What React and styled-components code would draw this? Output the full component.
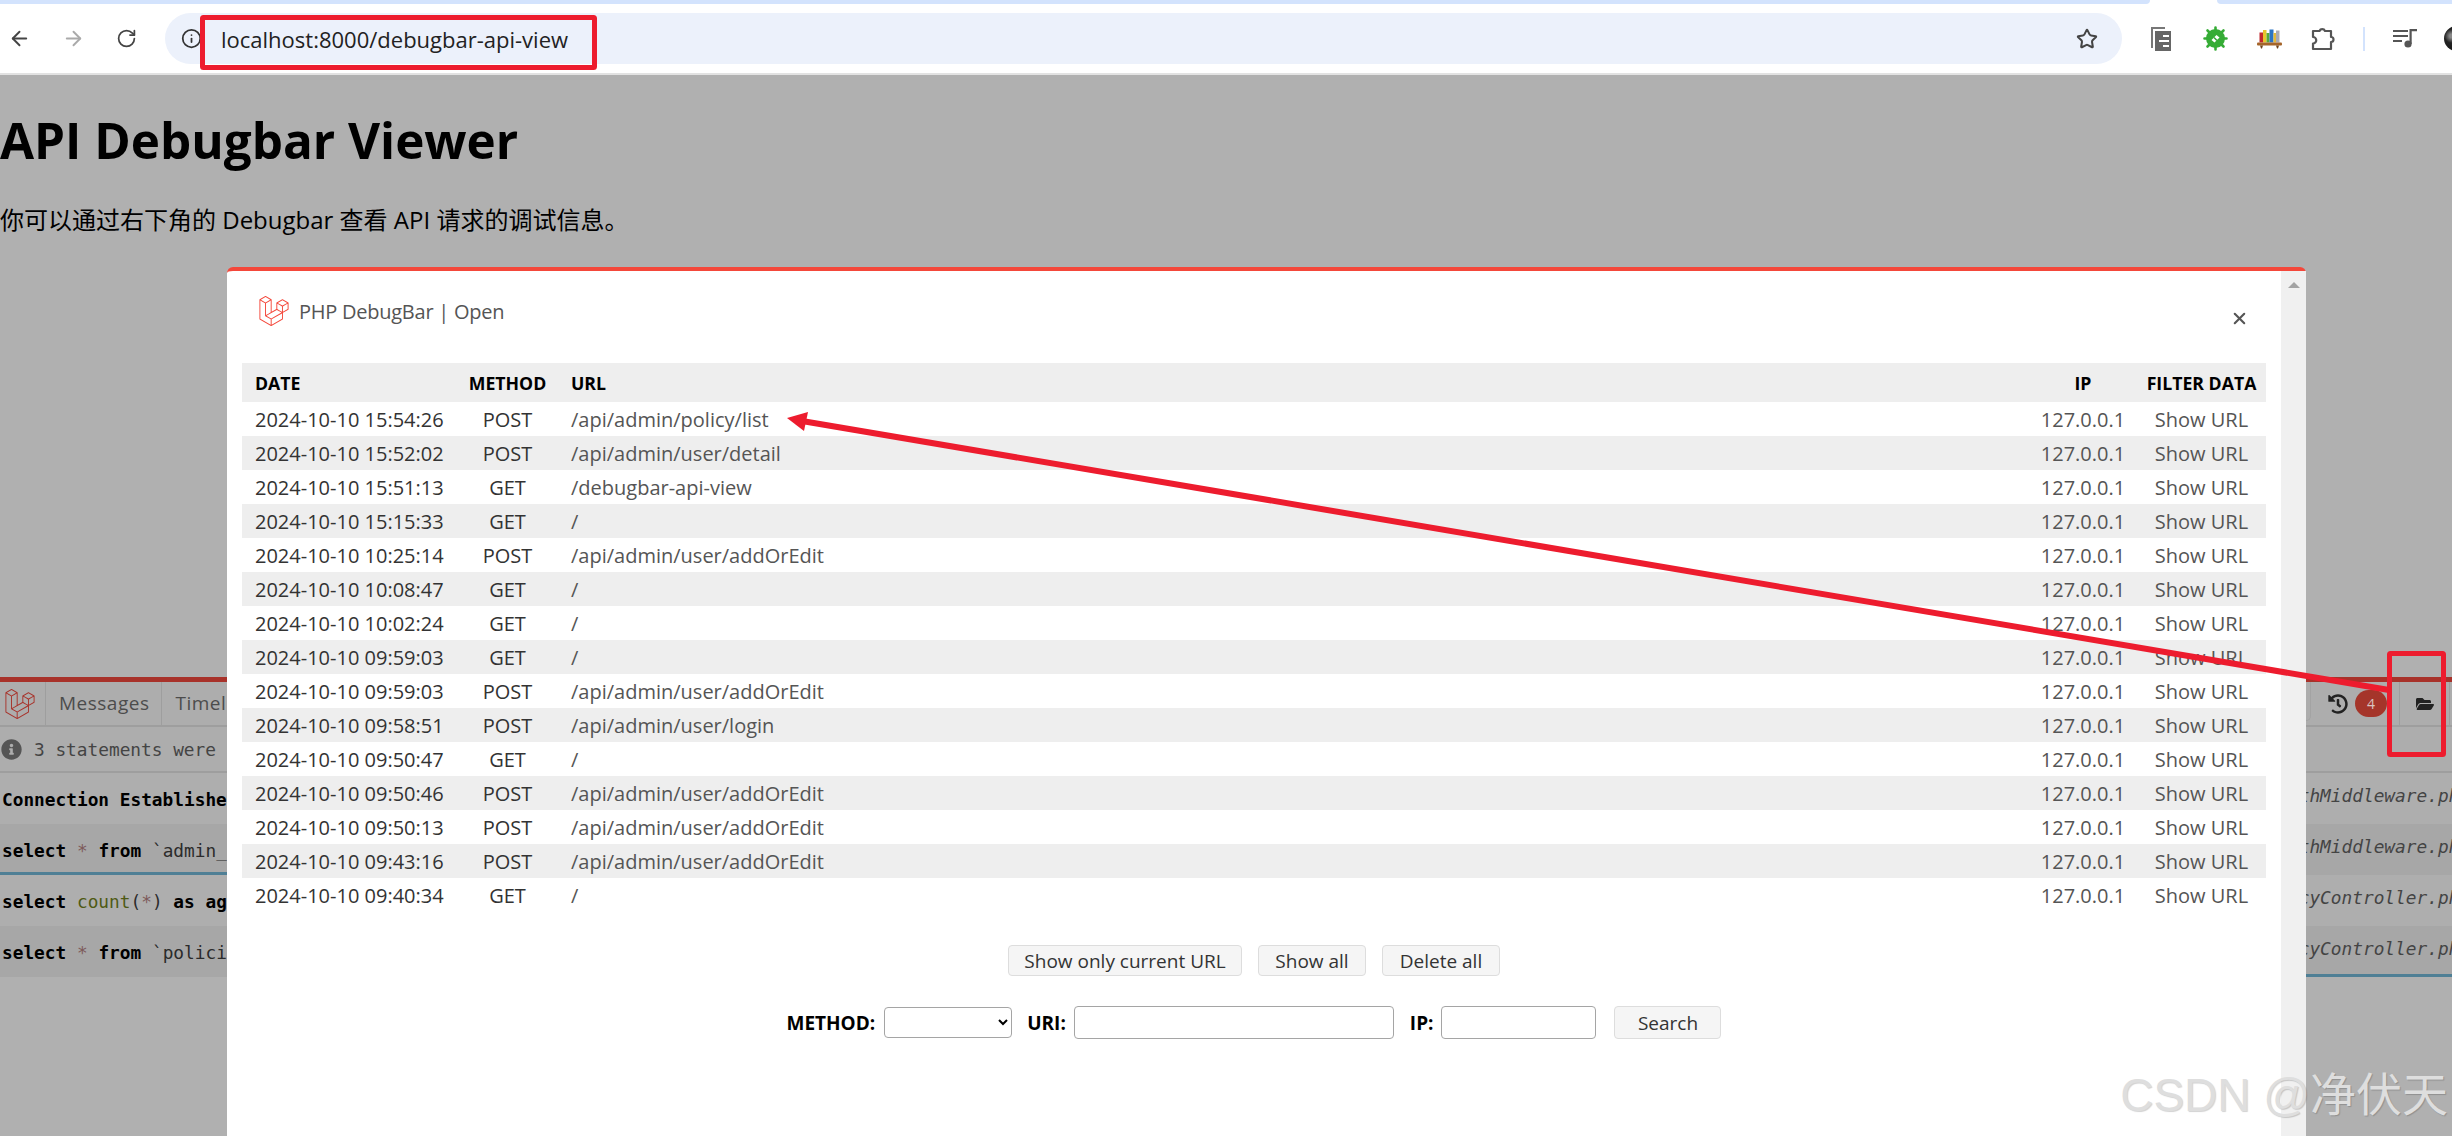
import React from 'react';
import styled, { createGlobalStyle } from 'styled-components';
import { ArrowLeft, ArrowRight, RotateCw, Info, Star, X } from 'lucide-react';
import { FaHistory, FaFolderOpen, FaInfoCircle } from 'react-icons/fa';
import { SiLaravel } from 'react-icons/si';

const UI_FONT = `"Open Sans", "Noto Sans CJK SC", sans-serif`;
const MONO_FONT = `"DejaVu Sans Mono", monospace`;

const requests = [
  ['2024-10-10 15:54:26', 'POST', '/api/admin/policy/list'],
  ['2024-10-10 15:52:02', 'POST', '/api/admin/user/detail'],
  ['2024-10-10 15:51:13', 'GET', '/debugbar-api-view'],
  ['2024-10-10 15:15:33', 'GET', '/'],
  ['2024-10-10 10:25:14', 'POST', '/api/admin/user/addOrEdit'],
  ['2024-10-10 10:08:47', 'GET', '/'],
  ['2024-10-10 10:02:24', 'GET', '/'],
  ['2024-10-10 09:59:03', 'GET', '/'],
  ['2024-10-10 09:59:03', 'POST', '/api/admin/user/addOrEdit'],
  ['2024-10-10 09:58:51', 'POST', '/api/admin/user/login'],
  ['2024-10-10 09:50:47', 'GET', '/'],
  ['2024-10-10 09:50:46', 'POST', '/api/admin/user/addOrEdit'],
  ['2024-10-10 09:50:13', 'POST', '/api/admin/user/addOrEdit'],
  ['2024-10-10 09:43:16', 'POST', '/api/admin/user/addOrEdit'],
  ['2024-10-10 09:40:34', 'GET', '/'],
];

const CopyIcon = () => (
  <svg width="22" height="26" viewBox="0 0 22 26">
    <path d="M2 22V2h13" fill="none" stroke="#777" strokeWidth="2" />
    <path d="M5 5h16v20H5z" fill="#666" />
    <path d="M13 10h6M9 15h10M13 20h6" stroke="#fff" strokeWidth="2" />
  </svg>
);

const BugIcon = () => (
  <svg width="25" height="25" viewBox="0 0 25 25">
    <g stroke="#35ac35" strokeWidth="2.6" strokeLinecap="round">
      <path d="M12.5 1.5v22M1.5 12.5h22M4.5 4.5l16 16M20.5 4.5l-16 16" />
    </g>
    <circle cx="12.5" cy="12.5" r="9.5" fill="#35ac35" />
    <path d="M8.5 14l5-5 3 2.5-5 5z" fill="#fff" />
    <path d="M11 11.5l3 3" stroke="#35ac35" strokeWidth="1.6" />
  </svg>
);

const ShelfIcon = () => (
  <svg width="25" height="20" viewBox="0 0 25 20">
    <rect x="2.5" y="3.5" width="3.5" height="10" fill="#c0272d" />
    <rect x="6" y="1" width="3.5" height="12.5" fill="#e8c52c" />
    <rect x="9.5" y="4" width="3" height="9.5" fill="#59a83a" />
    <rect x="12.5" y="0.5" width="4" height="13" fill="#2c74c4" />
    <rect x="16.5" y="4" width="2.5" height="9.5" fill="#e2b93a" />
    <rect x="19" y="1.5" width="3.5" height="12" fill="#a9a9b4" />
    <rect x="0" y="13.5" width="25" height="3" rx="1" fill="#a5652a" />
    <path d="M3 16.5h3l-1 3H4zM19 16.5h3l-1 3h-1z" fill="#6e421c" />
  </svg>
);

const PuzzleIcon = () => (
  <svg width="25" height="25" viewBox="0 0 25 25">
    <path
      d="M2 5h6.5a3 3 0 0 1 5.5 0H20v6a2.4 2.4 0 0 1 0 5v7H2v-5.5a3 3 0 0 0 0-6.5z"
      fill="none"
      stroke="#555"
      strokeWidth="2.2"
      strokeLinejoin="round"
    />
  </svg>
);

const MusicListIcon = () => (
  <svg width="24" height="19" viewBox="0 0 24 19">
    <path d="M0 2h15M0 7h15M0 12h9" stroke="#555" strokeWidth="2" />
    <circle cx="15" cy="15" r="3.6" fill="#555" />
    <path d="M17.6 15V1.2H24" fill="none" stroke="#555" strokeWidth="2.2" />
  </svg>
);

const Annotations = () => (
  <AnnotationLayer viewBox="0 0 2452 1136">
    <rect x="202.5" y="17.5" width="392" height="50" fill="none" stroke="#ed1c2e" strokeWidth="5" rx="1" />
    <rect x="2389.5" y="653.5" width="54" height="101" fill="none" stroke="#ed1c2e" strokeWidth="5" rx="1" />
    <line x1="2389" y1="690" x2="802" y2="421" stroke="#ed1c2e" strokeWidth="6" />
    <polygon points="787,418 808,412 804,431" fill="#ed1c2e" />
  </AnnotationLayer>
);

const App = () => (
  <Page>
    <GlobalStyle />
    <TabStrip>
      <TabRun />
      <TabGap />
      <TabRun />
    </TabStrip>
    <Toolbar>
      <NavButtons>
        <ArrowLeft size={23} color="#444" />
        <ArrowRight size={23} color="#aaa" />
        <RotateCw size={21} color="#444" />
      </NavButtons>
      <Omnibox>
        <Info size={21} color="#333" />
        <UrlText>localhost:8000/debugbar-api-view</UrlText>
        <Star size={22} color="#444" strokeWidth={2.2} />
      </Omnibox>
      <ExtSlot><CopyIcon /></ExtSlot>
      <ExtSlot><BugIcon /></ExtSlot>
      <ExtSlot><ShelfIcon /></ExtSlot>
      <ExtSlot><PuzzleIcon /></ExtSlot>
      <ToolbarDivider />
      <ExtSlot><MusicListIcon /></ExtSlot>
      <Avatar />
    </Toolbar>

    <Heading>API Debugbar Viewer</Heading>
    <Intro>你可以通过右下角的 Debugbar 查看 API 请求的调试信息。</Intro>

    <DebugBar>
      <BarHeader>
        <BarLogo><SiLaravel size={30} /></BarLogo>
        <BarTab>Messages</BarTab>
        <BarTab>Timeline</BarTab>
        <BarControls>
          <HistoryCell>
            <FaHistory size={20} />
            <Badge>4</Badge>
          </HistoryCell>
          <FolderCell><FaFolderOpen size={18} /></FolderCell>
        </BarControls>
      </BarHeader>
      <Notice>
        <FaInfoCircle size={21} color="#555" />
        3 statements were
      </Notice>
      <QueryRow>
        <QueryText><b>Connection Establishe</b></QueryText>
        <QuerySource>AuthMiddleware.php</QuerySource>
      </QueryRow>
      <QueryRow $alt>
        <QueryText><b>select</b> <Star2>*</Star2> <b>from</b> `admin_</QueryText>
        <QuerySource>AuthMiddleware.php</QuerySource>
        <TimeBar style={{ left: 0, width: `${(226 / 2452) * 100 + 5}%` }} />
      </QueryRow>
      <QueryRow>
        <QueryText><b>select</b> <Func>count</Func>(<Star2>*</Star2>) <b>as</b> <b>ag</b></QueryText>
        <QuerySource>PolicyController.php</QuerySource>
      </QueryRow>
      <QueryRow $alt>
        <QueryText><b>select</b> <Star2>*</Star2> <b>from</b> `polici</QueryText>
        <QuerySource>PolicyController.php</QuerySource>
        <TimeBar style={{ right: 0, width: `${(146 / 2452) * 100 + 5}%` }} />
      </QueryRow>
    </DebugBar>

    <Modal>
      <ModalBody>
        <ModalHeader>
          <ModalTitle>
            <SiLaravel size={30} color="#f4473a" />
            PHP DebugBar | Open
          </ModalTitle>
          <CloseButton><X size={19} strokeWidth={2.6} color="#555" /></CloseButton>
        </ModalHeader>
        <Table>
          <colgroup>
            <col width="215" />
            <col width="101" />
            <col />
            <col width="108" />
            <col width="129" />
          </colgroup>
          <thead>
            <tr>
              <Th>Date</Th>
              <Th $center>Method</Th>
              <Th>URL</Th>
              <Th $center>IP</Th>
              <Th $center>Filter data</Th>
            </tr>
          </thead>
          <tbody>
            {requests.map(([date, method, url], i) => (
              <Row key={date + i} $alt={i % 2 === 1}>
                <DateCell>{date}</DateCell>
                <DateCell $center>{method}</DateCell>
                <Td>{url}</Td>
                <Td $center>127.0.0.1</Td>
                <Td $center>Show URL</Td>
              </Row>
            ))}
          </tbody>
        </Table>
        <Actions>
          <ActionButton $w={234}>Show only current URL</ActionButton>
          <ActionButton $w={108}>Show all</ActionButton>
          <ActionButton $w={118}>Delete all</ActionButton>
        </Actions>
        <SearchForm>
          <FieldLabel>METHOD:</FieldLabel>
          <MethodSelect>
            <option></option>
            <option>GET</option>
            <option>POST</option>
          </MethodSelect>
          <FieldLabel $gap={16}>URI:</FieldLabel>
          <TextField $w={320} />
          <FieldLabel $gap={16}>IP:</FieldLabel>
          <TextField $w={155} />
          <SearchButton>Search</SearchButton>
        </SearchForm>
      </ModalBody>
      <Scrollbar><ScrollArrow /></Scrollbar>
    </Modal>

    <Annotations />
    <Watermark>CSDN @净伏天</Watermark>
  </Page>
);

const GlobalStyle = createGlobalStyle`
  html, body {
    margin: 0;
    padding: 0;
    background: #b0b0b0;
  }
`;

const Page = styled.div`
  position: relative;
  display: flex;
  flex-direction: column;
  width: 2452px;
  height: 1136px;
  overflow: hidden;
  background: #b0b0b0;
  font-family: ${UI_FONT};
`;

const TabStrip = styled.div`
  display: flex;
  height: 4px;
  background: #fff;
`;

const TabRun = styled.div`
  flex: 1;
  background: #d3e3fd;
  &:first-child {
    border-bottom-right-radius: 6px;
  }
  &:last-child {
    flex: 0 0 235px;
    border-bottom-left-radius: 6px;
  }
`;

const TabGap = styled.div`
  width: 67px;
`;

const Toolbar = styled.div`
  display: flex;
  align-items: center;
  flex: none;
  height: 69px;
  background: #fff;
  border-bottom: 2px solid #e2e2e2;
  padding-left: 8px;
`;

const NavButtons = styled.div`
  display: flex;
  align-items: center;
  gap: 31px;
  margin-right: 28px;
`;

const Omnibox = styled.div`
  display: flex;
  align-items: center;
  flex: none;
  width: 1957px;
  height: 51px;
  margin-right: 12px;
  padding: 0 24px 0 16px;
  box-sizing: border-box;
  background: #ecf1fb;
  border-radius: 26px;
`;

const UrlText = styled.span`
  flex: 1;
  margin-left: 19px;
  font-size: 22px;
  color: #222;
`;

const ExtSlot = styled.div`
  display: flex;
  align-items: center;
  justify-content: center;
  flex: none;
  width: 54px;
`;

const ToolbarDivider = styled.div`
  flex: none;
  width: 2px;
  height: 24px;
  margin: 0 13px;
  background: #d3e3fd;
`;

const Avatar = styled.div`
  flex: none;
  width: 25px;
  height: 25px;
  margin-left: 12px;
  border-radius: 50%;
  background: radial-gradient(circle at 30% 40%, #888 0 8%, #222 30%, #111 100%);
`;

const Heading = styled.h1`
  margin: 33px 0 0;
  font-size: 49.4px;
  line-height: 64px;
  font-weight: 700;
  color: #000;
`;

const Intro = styled.p`
  margin: 32px 0 0;
  font-size: 24px;
  line-height: 32px;
  color: #000;
`;

const DebugBar = styled.div`
  margin-top: auto;
  height: 459px;
  flex: none;
  border-top: 5px solid #a8322a;
  box-sizing: border-box;
  background: #b0b0b0;
`;

const BarHeader = styled.div`
  display: flex;
  height: 45px;
  box-sizing: border-box;
  background: #adadad;
  border-bottom: 2px solid #9e9e9e;
  font-size: 19px;
  color: #4c4c4c;
`;

const BarLogo = styled.div`
  display: flex;
  align-items: center;
  justify-content: center;
  width: 46px;
  padding-right: 5px;
  color: #a8322a;
  border-right: 1px solid #9e9e9e;
  box-sizing: border-box;
`;

const BarTab = styled.div`
  display: flex;
  align-items: center;
  padding: 0 12px 2px 13px;
  letter-spacing: 0.5px;
  border-right: 1px solid #9e9e9e;
`;

const BarControls = styled.div`
  display: flex;
  margin-left: auto;
  margin-right: 2px;
  color: #222;
`;

const HistoryCell = styled.div`
  position: relative;
  display: flex;
  align-items: center;
  width: 92px;
  padding-left: 20px;
  box-sizing: border-box;
  border-right: 1px solid #9e9e9e;
  &::before {
    content: '';
    position: absolute;
    left: -2px;
    top: 0;
    bottom: 4px;
    width: 4px;
    border-right: 1px solid #a3a3a3;
    border-bottom: 1px solid #a3a3a3;
    border-bottom-right-radius: 5px;
  }
`;

const Badge = styled.span`
  margin-left: 7px;
  width: 32px;
  height: 27px;
  border-radius: 14px;
  background: #a5352a;
  color: #d9c4c0;
  font-size: 14px;
  line-height: 27px;
  text-align: center;
`;

const FolderCell = styled.div`
  display: flex;
  align-items: center;
  justify-content: center;
  width: 50px;
  border-right: 1px solid #9e9e9e;
  box-sizing: border-box;
`;

const Notice = styled.div`
  display: flex;
  align-items: center;
  gap: 12px;
  height: 46px;
  padding: 1px 0 0 1px;
  box-sizing: border-box;
  background: #adadad;
  border-bottom: 2px solid #9e9e9e;
  font-family: ${MONO_FONT};
  font-size: 17.8px;
  color: #444;
  white-space: nowrap;
`;

const QueryRow = styled.div`
  position: relative;
  display: flex;
  align-items: center;
  justify-content: space-between;
  height: 51px;
  padding: 1px 0 0 2px;
  box-sizing: border-box;
  overflow: hidden;
  background: ${(p) => (p.$alt ? '#a7a7a7' : '#aeaeae')};
  font-family: ${MONO_FONT};
  font-size: 17.8px;
  color: #2b2b2b;
  white-space: nowrap;
  b {
    color: #000;
    font-weight: 700;
  }
`;

const QueryText = styled.span``;

const Star2 = styled.span`
  color: #7d5a5a;
`;

const Func = styled.span`
  color: #4e5a14;
`;

const QuerySource = styled.span`
  margin-right: -18px;
  padding-bottom: 7px;
  font-style: italic;
  color: #444;
`;

const TimeBar = styled.div`
  position: absolute;
  bottom: 0;
  height: 3px;
  background: #4f7f95;
`;

const Modal = styled.div`
  position: absolute;
  top: 267px;
  left: 227px;
  bottom: 0;
  display: grid;
  grid-template-columns: 2054px 25px;
  background: #fff;
  border-top: 4px solid #f4473a;
  border-radius: 6px 6px 0 0;
`;

const ModalBody = styled.div`
  padding: 0 15px;
`;

const ModalHeader = styled.div`
  display: flex;
  justify-content: space-between;
  align-items: center;
  height: 82px;
  margin-bottom: 10px;
  padding: 0 20px 0 17px;
`;

const ModalTitle = styled.div`
  display: flex;
  align-items: center;
  gap: 10px;
  padding-bottom: 2px;
  font-size: 20px;
  letter-spacing: -0.25px;
  color: #555;
`;

const CloseButton = styled.div`
  display: flex;
  margin-top: 12px;
  margin-right: -3px;
`;

const Table = styled.table`
  width: 2024px;
  table-layout: fixed;
  border-collapse: collapse;
  font-size: 20px;
`;

const Th = styled.th`
  height: 39px;
  padding: 0 0 0 13px;
  background: #eee;
  color: #000;
  font-size: 17.7px;
  font-weight: 700;
  text-transform: uppercase;
  white-space: nowrap;
  text-align: ${(p) => (p.$center ? 'center' : 'left')};
  ${(p) => p.$center && 'padding: 0;'}
`;

const Row = styled.tr`
  height: 34px;
  background: ${(p) => (p.$alt ? '#eee' : '#fff')};
`;

const Td = styled.td`
  padding: 1px 0 0 ${(p) => (p.$center ? 0 : 13)}px;
  color: #555;
  white-space: nowrap;
  text-align: ${(p) => (p.$center ? 'center' : 'left')};
`;

const DateCell = styled(Td)`
  color: #333;
`;

const Actions = styled.div`
  display: flex;
  justify-content: center;
  gap: 16px;
  margin-top: 33px;
`;

const ActionButton = styled.button`
  width: ${(p) => p.$w}px;
  height: 31px;
  padding: 0;
  background: #f5f5f5;
  border: 1px solid #ddd;
  border-radius: 4px;
  font-family: ${UI_FONT};
  font-size: 19px;
  color: #333;
`;

const SearchForm = styled.div`
  display: flex;
  justify-content: center;
  align-items: center;
  margin-top: 30px;
  height: 33px;
`;

const FieldLabel = styled.label`
  margin: 0 8px 0 ${(p) => p.$gap || 0}px;
  font-size: 19px;
  font-weight: 700;
  color: #000;
`;

const MethodSelect = styled.select`
  width: 128px;
  height: 31px;
  margin: 0 -1px 0 1px;
  background: #fff;
  border: 1px solid #a5a5a5;
  border-radius: 4px;
`;

const TextField = styled.input`
  width: ${(p) => p.$w}px;
  height: 33px;
  padding: 0;
  box-sizing: border-box;
  background: #fff;
  border: 1px solid #a5a5a5;
  border-radius: 4px;
`;

const SearchButton = styled(ActionButton)`
  width: 107px;
  height: 33px;
  margin-left: 18px;
`;

const Scrollbar = styled.div`
  display: flex;
  justify-content: center;
  padding-top: 11px;
  background: #f0f0f0;
`;

const ScrollArrow = styled.div`
  width: 0;
  height: 0;
  border-left: 6px solid transparent;
  border-right: 6px solid transparent;
  border-bottom: 6px solid #a3a3a3;
`;

const AnnotationLayer = styled.svg`
  position: absolute;
  inset: 0;
  width: 2452px;
  height: 1136px;
  pointer-events: none;
`;

const Watermark = styled.div`
  position: absolute;
  right: 4px;
  bottom: 16px;
  font-family: "Liberation Sans", "Noto Sans CJK SC", sans-serif;
  font-size: 46px;
  line-height: 50px;
  color: #dedede;
  text-shadow: 1px 1px 1px rgba(0, 0, 0, 0.18);
  white-space: nowrap;
`;

export default App;
